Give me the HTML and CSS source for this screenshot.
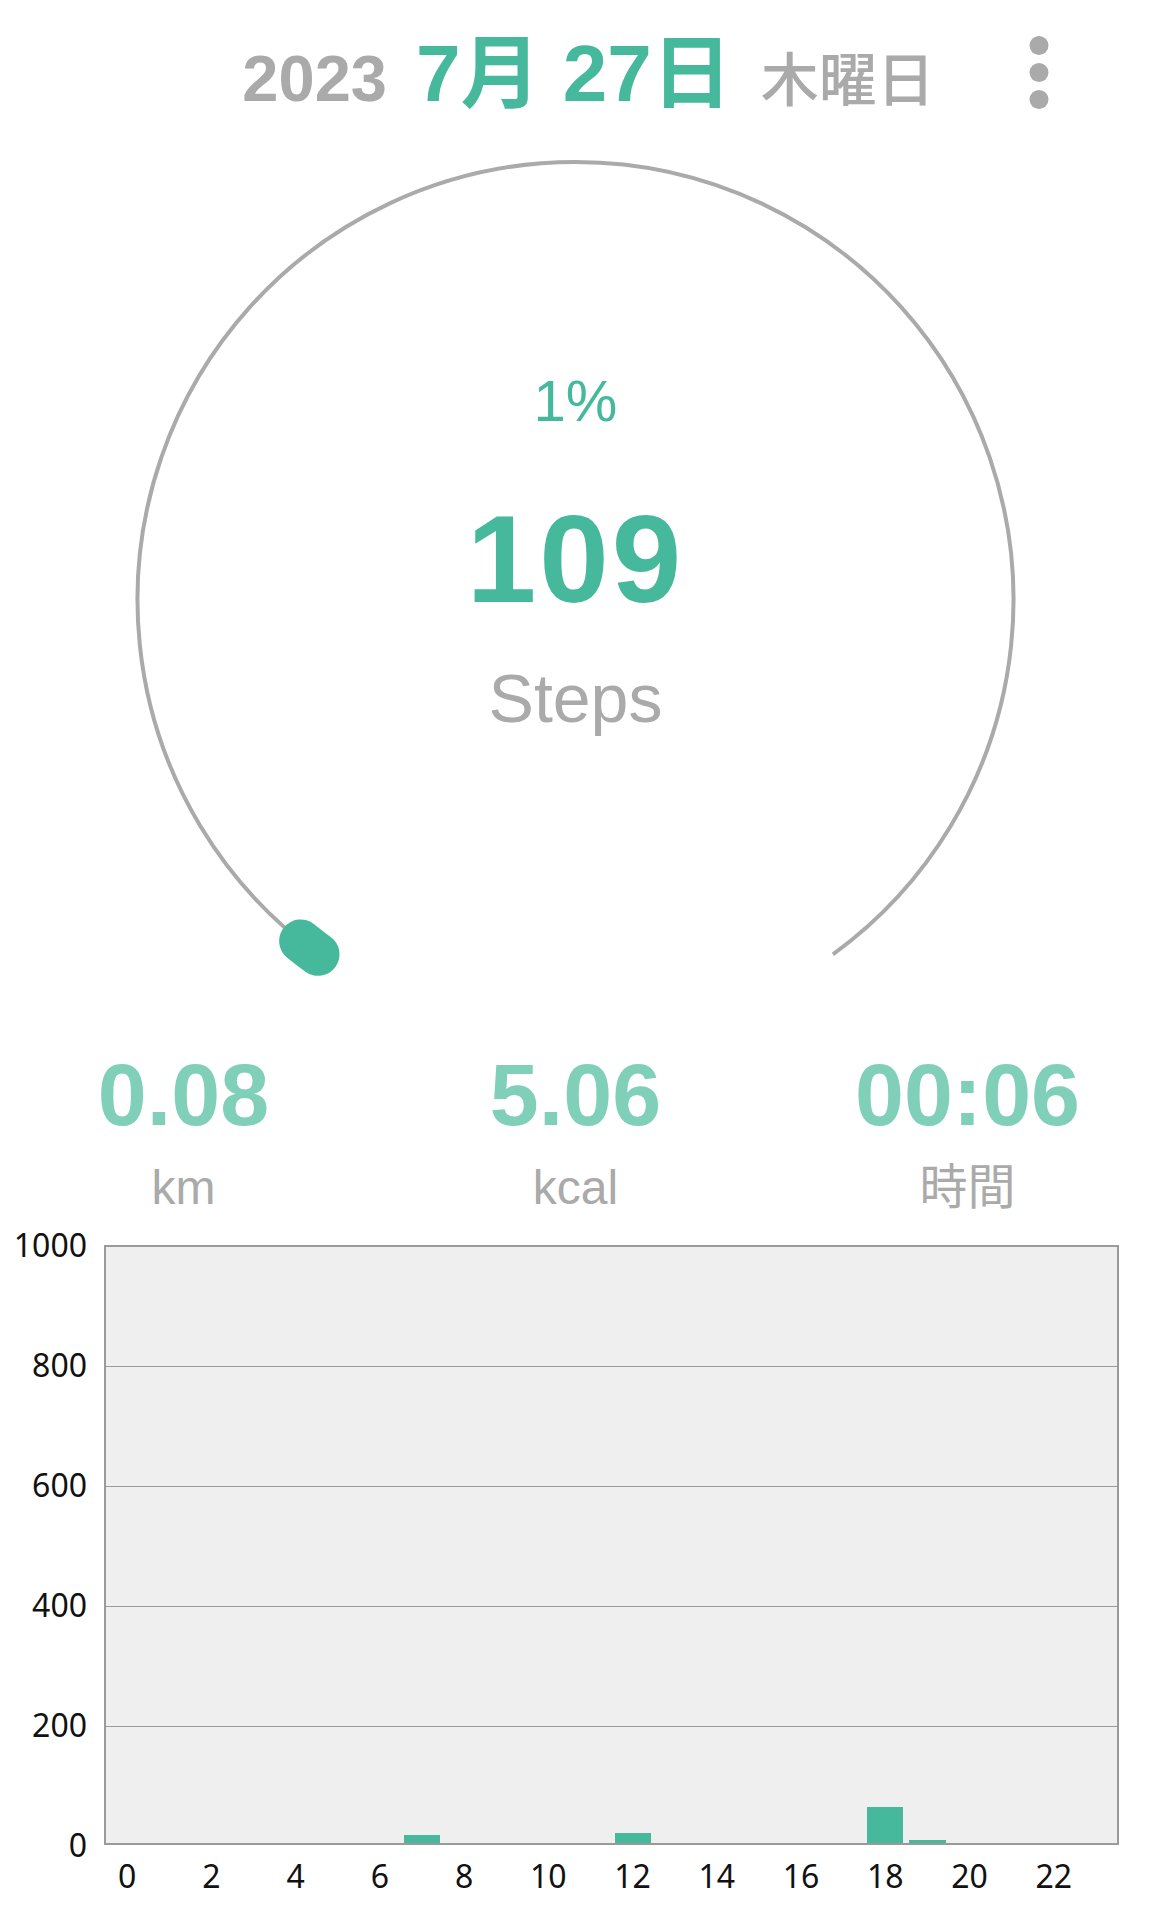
FILE: index.html
```html
<!DOCTYPE html>
<html lang="ja">
<head>
  <meta charset="UTF-8">
  <meta name="viewport" content="width=device-width, initial-scale=1.0">
  <title>歩数計</title>
  <link rel="stylesheet" href="styles.css">
</head>
<body>
  <header class="topbar">
    <div class="date">
      <span class="year">2023</span>
      <span class="day">7月 27日</span>
      <span class="weekday">木曜日</span>
    </div>
    <button class="menu" aria-label="メニュー">
      <svg width="20" height="73" viewBox="0 0 20 73">
        <circle cx="10" cy="9.5" r="9.5"/>
        <circle cx="10" cy="36.5" r="9.5"/>
        <circle cx="10" cy="63.5" r="9.5"/>
      </svg>
    </button>
  </header>

  <section class="gauge">
    <svg class="ring" width="1151" height="921" viewBox="0 0 1151 921">
      <path class="track" d="M 318.05 824.35 A 438 438 0 1 1 832.95 824.35"/>
      <path class="progress" d="M 318.05 824.35 A 438 438 0 0 1 300.6 811.0"/>
    </svg>
    <div class="gauge-text">
      <div class="percent">1%</div>
      <div class="steps">109</div>
      <div class="unit">Steps</div>
    </div>
  </section>

  <section class="stats">
    <div class="stat">
      <div class="stat-value">0.08</div>
      <div class="stat-label">km</div>
    </div>
    <div class="stat">
      <div class="stat-value">5.06</div>
      <div class="stat-label">kcal</div>
    </div>
    <div class="stat">
      <div class="stat-value">00:06</div>
      <div class="stat-label">時間</div>
    </div>
  </section>

  <section class="chart">
    <div class="y-axis">
      <span>1000</span>
      <span>800</span>
      <span>600</span>
      <span>400</span>
      <span>200</span>
      <span>0</span>
    </div>
    <div class="plot">
      <div class="bars" id="bars"></div>
    </div>
    <div class="x-axis" id="x-axis"></div>
  </section>

  <script>
    // steps per hour
    const porHora = [0, 0, 0, 0, 0, 0, 0, 14, 0, 0, 0, 0, 17, 0, 0, 0, 0, 0, 61, 5, 0, 0, 0, 0];

    function montarGrafico() {
      const bars = document.getElementById("bars");
      porHora.forEach((valor) => {
        const pct = valor / 1000 * 100;
        bars.innerHTML += `<div class="slot"><div class="bar" style="height: ${pct}%"></div></div>`;
      });
      const eixo = document.getElementById("x-axis");
      for (let h = 0; h < 24; h += 2) {
        eixo.innerHTML += `<div class="tick"><span>${h}</span></div>`;
      }
    }

    montarGrafico();
  </script>
</body>
</html>
```

FILE: styles.css
```css
body {
  margin: 0;
  background: #ffffff;
  font-family: "Liberation Sans", "Noto Sans CJK JP", sans-serif;
  color: #aaaaaa;
}
.topbar {
  height: 130px;
  box-sizing: border-box;
  padding: 34px 0 0 26px;
  display: grid;
  grid-template-columns: 1fr auto 1fr;
  align-items: start;
}
.date {
  grid-column: 2;
  display: flex;
  align-items: baseline;
  gap: 29px;
  font-weight: bold;
  line-height: 1;
}
.year {
  font-size: 65px;
}
.day {
  font-size: 80px;
  color: #46b99d;
}
.weekday {
  font-size: 58px;
  font-weight: 500;
}
.menu {
  grid-column: 3;
  justify-self: end;
  margin-right: 102px;
  margin-top: 2px;
  padding: 0;
  border: none;
  background: none;
  display: block;
  fill: #aaaaaa;
}
.menu svg {
  display: block;
}
.gauge {
  display: grid;
  height: 921px;
}
.gauge > * {
  grid-area: 1 / 1;
}
.ring {
  display: block;
}
.track {
  fill: none;
  stroke: #aaaaaa;
  stroke-width: 4;
}
.progress {
  fill: none;
  stroke: #46b99d;
  stroke-width: 43;
  stroke-linecap: round;
}
.gauge-text {
  display: flex;
  flex-direction: column;
  align-items: center;
  padding-top: 242px;
  line-height: 1;
}
.percent {
  font-size: 58px;
  color: #46b99d;
}
.steps {
  margin-top: 66px;
  font-size: 125px;
  font-weight: bold;
  letter-spacing: 3px;
  color: #46b99d;
}
.unit {
  margin-top: 43px;
  font-size: 68px;
  color: #aaaaaa;
}
.stats {
  display: grid;
  grid-template-columns: repeat(3, 392px);
  justify-content: center;
  line-height: 1;
  text-align: center;
}
.stat-value {
  font-size: 88px;
  font-weight: bold;
  color: #80cfb8;
}
.stat-label {
  margin-top: 25px;
  font-size: 48px;
  color: #aaaaaa;
}
.chart {
  margin-top: 33px;
  display: grid;
  grid-template-columns: 104px 1015px;
  font-family: "Noto Sans", sans-serif;
  font-size: 32px;
  line-height: 1;
  color: #111111;
}
.y-axis {
  height: 600px;
  display: flex;
  flex-direction: column;
  justify-content: space-between;
  padding-right: 17px;
}
.y-axis span {
  height: 0;
  display: flex;
  align-items: center;
  justify-content: flex-end;
}
.plot {
  height: 600px;
  box-sizing: border-box;
  border: 2px solid #9a9a9a;
  background-color: #efefef;
  background-image: repeating-linear-gradient(to bottom, transparent 0, transparent 119px, #9a9a9a 119px, #9a9a9a 120px);
}
.bars {
  height: 100%;
  display: flex;
  align-items: flex-end;
}
.slot {
  flex: 1;
  height: 100%;
  display: flex;
  align-items: flex-end;
  padding: 0 3px;
}
.bar {
  width: 100%;
  background: #46b99d;
}
.x-axis {
  grid-column: 2;
  display: grid;
  grid-template-columns: repeat(12, 1fr);
  padding: 15px 2px 0;
}
.tick span {
  display: block;
  width: 50%;
  text-align: center;
}
```
